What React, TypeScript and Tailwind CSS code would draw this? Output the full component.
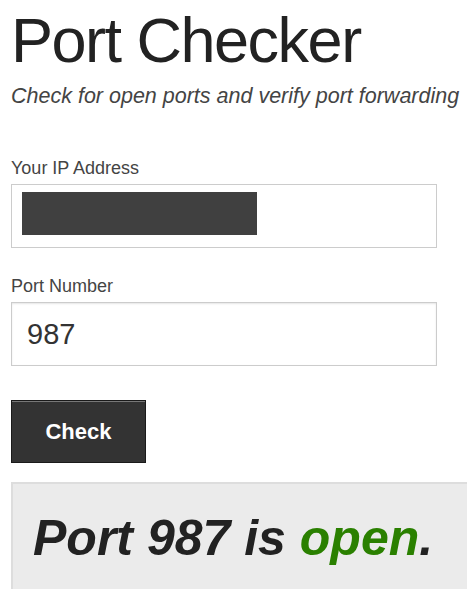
export default function App() {
  return (
    <div className="h-[589px] w-[467px] overflow-hidden bg-white font-['Liberation_Sans',Arial,sans-serif]">
      <div className="pl-[11px]">
        <h1 className="mt-[8px] text-[63px] leading-[64px] tracking-[-1.5px] text-[#222]">Port Checker</h1>
        <p className="mt-[12px] whitespace-nowrap text-[21.5px] leading-[24px] italic text-[#444]">
          Check for open ports and verify port forwarding
        </p>

        <label className="mt-[50px] block text-[18px] leading-[20px] text-[#444]">Your IP Address</label>
        <div className="mt-[6px] h-[64px] w-[426px] border border-[#ccc] bg-white px-[10px] pt-[7px]">
          <div className="h-[43px] w-[235px] bg-[#404040]" />
        </div>

        <label className="mt-[28px] block text-[18px] leading-[20px] text-[#444]">Port Number</label>
        <input
          type="text"
          defaultValue="987"
          className="mt-[6px] block h-[64px] w-[426px] border border-[#ccc] bg-white px-[15px] text-[29px] text-[#333] shadow-[inset_0_1px_2px_rgba(0,0,0,0.1)] outline-none"
        />

        <button className="mt-[34px] block h-[63px] w-[135px] border border-[#1a1a1a] bg-[#333] text-[22px] font-bold text-white shadow-[inset_0_1px_0_#777]">
          Check
        </button>

        <div className="mt-[19px] -mr-[40px] border-2 border-[#ddd] bg-[#ebebeb] pl-[20px] pt-[27px] pb-[30px]">
          <p className="whitespace-nowrap text-[50px] leading-[55px] font-bold italic text-[#222]">
            Port 987 is <span className="text-[#2a8000]">open</span>.
          </p>
        </div>
      </div>
    </div>
  );
}
